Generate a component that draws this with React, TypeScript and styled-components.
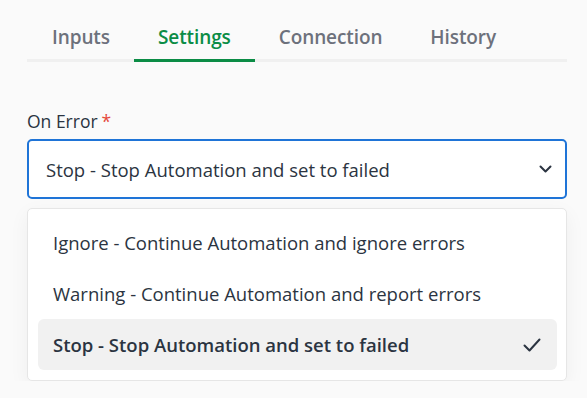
import React from "react";
import styled, { createGlobalStyle } from "styled-components";

const GlobalStyle = createGlobalStyle`
  body {
    margin: 0;
    background: #fafafa;
    font-family: "Open Sans", "Liberation Sans", sans-serif;
    color: #2b3441;
  }
`;

const Page = styled.div`
  padding: 0 20px 0 27px;
  width: 540px;
`;

const TabBar = styled.div`
  display: flex;
  margin-top: 14px;
  padding-left: 1px;
  border-bottom: 3px solid #f0f0f0;
`;

const Tab = styled.div<{ $active?: boolean }>`
  padding: 0 24px;
  height: 45px;
  display: flex;
  align-items: center;
  font-size: 19px;
  font-weight: 600;
  letter-spacing: -0.1px;
  color: ${(p) => (p.$active ? "#0b8c45" : "#6d717c")};
  position: relative;
  &::after {
    content: "";
    display: ${(p) => (p.$active ? "block" : "none")};
    position: absolute;
    left: 0;
    right: 0;
    bottom: -3px;
    height: 3px;
    background: #0b8c45;
  }
`;

const Field = styled.div`
  margin-top: 48px;
`;

const Label = styled.div`
  font-size: 17.5px;
  line-height: 22px;
  color: #2b3441;
  margin-bottom: 7px;
  span {
    color: #e5483c;
    margin-left: 4px;
  }
`;

const Select = styled.div`
  height: 60px;
  box-sizing: border-box;
  border: 2px solid #1f74d7;
  border-radius: 5px;
  background: #fff;
  display: flex;
  align-items: center;
  justify-content: space-between;
  padding: 0 13px 0 17px;
  font-size: 18.5px;
`;

const Menu = styled.div`
  margin-top: 9px;
  background: #fff;
  border: 1px solid #e6e6e6;
  border-radius: 5px;
  box-shadow: 0 6px 20px rgba(0, 0, 0, 0.05);
  padding: 8px 9px 10px 10px;
  display: flex;
  flex-direction: column;
`;

const Option = styled.div<{ $selected?: boolean }>`
  height: 51px;
  display: flex;
  align-items: center;
  justify-content: space-between;
  padding: 0 16px 0 15px;
  border-radius: 6px;
  font-size: 18.5px;
  font-weight: ${(p) => (p.$selected ? 600 : 400)};
  background: ${(p) => (p.$selected ? "#f1f1f1" : "transparent")};
  color: #2b3441;
`;

const Chevron = () => (
  <svg width="13" height="8" viewBox="0 0 13 8" fill="none">
    <path d="M1.5 1.5 L6.5 6.5 L11.5 1.5" stroke="#2b3441" strokeWidth="2" strokeLinecap="round" strokeLinejoin="round" />
  </svg>
);

const Check = () => (
  <svg width="18" height="14" viewBox="0 0 18 14" fill="none">
    <path d="M1.5 7.5 L6.5 12.5 L16.5 1.5" stroke="#2b3441" strokeWidth="2" strokeLinecap="round" strokeLinejoin="round" />
  </svg>
);

const options = [
  "Ignore - Continue Automation and ignore errors",
  "Warning - Continue Automation and report errors",
  "Stop - Stop Automation and set to failed",
];

export default function App() {
  const selected = 2;
  return (
    <>
      <GlobalStyle />
      <Page>
        <TabBar>
          <Tab>Inputs</Tab>
          <Tab $active>Settings</Tab>
          <Tab>Connection</Tab>
          <Tab>History</Tab>
        </TabBar>
        <Field>
          <Label>
            On Error<span>*</span>
          </Label>
          <Select>
            {options[selected]}
            <Chevron />
          </Select>
          <Menu>
            {options.map((o, i) => (
              <Option key={o} $selected={i === selected}>
                {o}
                {i === selected && <Check />}
              </Option>
            ))}
          </Menu>
        </Field>
      </Page>
    </>
  );
}
